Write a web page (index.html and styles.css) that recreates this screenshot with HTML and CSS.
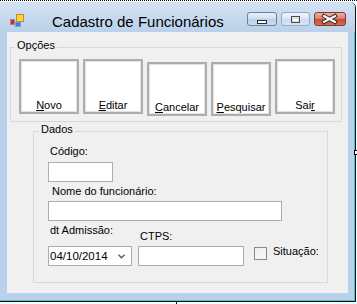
FILE: index.html
```html
<!DOCTYPE html>
<html>
<head>
  <meta charset="UTF-8">
  <title>Cadastro de Funcionários</title>
  <link rel="stylesheet" href="styles.css">
</head>
<body>
  <div class="marquee"></div>
  <div class="window">
    <div class="titlebar">
      <svg class="app-icon" width="14" height="13" viewBox="0 0 14 13">
        <rect x="6.5" y="0.5" width="7" height="7" fill="#ffd23c" stroke="#d08a1c"/>
        <rect x="0.5" y="5.5" width="4" height="5" fill="#d42a22" stroke="#9a8a8a"/>
        <rect x="5.5" y="8" width="5" height="4.5" fill="#3b7fd8" stroke="#7aa3dc"/>
      </svg>
      <span class="title">Cadastro de Funcionários</span>
      <div class="caption">
        <span class="cap cap-min">
          <svg width="28" height="12" viewBox="0 0 28 12"><rect x="9.5" y="7.5" width="9" height="3" fill="#fff" stroke="#2b2b2b"/></svg>
        </span>
        <span class="cap cap-max">
          <svg width="27" height="12" viewBox="0 0 27 12"><rect x="9.5" y="3.5" width="8" height="6" fill="none" stroke="#4a4a4a"/><rect x="10.5" y="5.5" width="6" height="3" fill="#fff" stroke="#d8d8d8"/></svg>
        </span>
        <span class="cap cap-close">
          <svg width="30" height="12" viewBox="0 0 30 12"><path d="M9 3 L20 9 M20 3 L9 9" stroke="#3a2a2a" stroke-width="4" stroke-linecap="square"/><path d="M9 3 L20 9 M20 3 L9 9" stroke="#fff" stroke-width="2" stroke-linecap="square"/></svg>
        </span>
      </div>
    </div>
    <div class="client">
      <fieldset class="group group-opcoes">
        <legend>Opções</legend>
        <div class="btn-row">
          <button class="btn"><u>N</u>ovo</button>
          <button class="btn"><u>E</u>ditar</button>
          <button class="btn btn-low"><u>C</u>ancelar</button>
          <button class="btn btn-low"><u>P</u>esquisar</button>
          <button class="btn">Sai<u>r</u></button>
        </div>
      </fieldset>
      <fieldset class="group group-dados">
        <legend>Dados</legend>
        <label class="lbl">Código:</label>
        <input type="text" class="textbox tb-codigo">
        <label class="lbl lbl-nome">Nome do funcionário:</label>
        <input type="text" class="textbox tb-nome">
        <div class="row-bottom">
          <div class="col-data">
            <label class="lbl">dt Admissão:</label>
            <div class="datebox">
              <span>04/10/2014</span>
              <svg width="7" height="5" viewBox="0 0 7 5"><path d="M0.5 0.8 L3.5 3.8 L6.5 0.8" fill="none" stroke="#5a5a5a" stroke-width="1.4"/></svg>
            </div>
          </div>
          <div class="col-ctps">
            <label class="lbl">CTPS:</label>
            <input type="text" class="textbox tb-ctps">
          </div>
          <div class="col-situacao">
            <span class="checkbox"></span>
            <label class="lbl-check">Situação:</label>
          </div>
        </div>
      </fieldset>
    </div>
  </div>
  <span class="resize-tip"></span>
  <span class="bottom-tick"></span>
</body>
</html>
```

FILE: styles.css
```css
body {
  margin: 0;
  width: 357px;
  height: 304px;
  position: relative;
  overflow: hidden;
  background: #fff;
  font-family: "Liberation Sans", Arial, sans-serif;
  font-size: 11px;
  color: #000;
}
.marquee { height: 0; border-top: 1px dotted #000; margin-bottom: 1px; }

.window {
  box-sizing: border-box;
  width: 356px;
  height: 300px;
  background: #b9d1ea;
  border-right: 1px solid #111;
  border-bottom: 1px solid #111;
  border-top-right-radius: 6px;
  box-shadow: inset -1px -1px 0 #3fc8d8;
  overflow: hidden;
}

.titlebar {
  display: flex;
  align-items: flex-start;
  height: 30px;
  padding: 0 9px 0 10px;
  background: linear-gradient(#d3e2f3, #bad1ea);
}
.app-icon { margin-top: 12px; flex: none; }
.title {
  margin: 11px 0 0 28px;
  font-size: 15px;
  line-height: 18px;
  color: #000;
  white-space: nowrap;
}
.caption { display: flex; gap: 4px; margin: 10px 0 0 auto; }
.cap {
  box-sizing: border-box;
  display: block;
  height: 14px;
  border-radius: 3px;
}
.cap svg { display: block; }
.cap-min {
  width: 30px;
  border: 1px solid #6c819e;
  background: linear-gradient(#e7eff9 0%, #d3e1f1 45%, #b9cee9 50%, #cbdcf0 100%);
}
.cap-max {
  width: 29px;
  border: 1px solid #94a9c6;
  background: linear-gradient(#edf3fa 0%, #dde8f4 45%, #cad9ed 50%, #d8e5f3 100%);
}
.cap-close {
  width: 32px;
  border: 1px solid #86362a;
  background: linear-gradient(#eab0a2 0%, #dc8672 45%, #c84a33 50%, #d56d55 100%);
}

.client {
  width: 341px;
  height: 261px;
  margin-left: 7px;
  background: #f0f0f0;
  overflow: hidden;
}

.group {
  box-sizing: border-box;
  min-width: 0;
  margin: 0;
  border: 1px solid #d5d9dd;
}
.group legend {
  padding: 0 2px 3px;
  font-size: 11px;
  line-height: 13px;
}
.group-opcoes { width: 332px; margin: 7px 0 0 3px; padding: 4px 0 5px 8px; }
.group-opcoes legend { margin-left: -4px; }
.group-dados { width: 295px; margin: 1px 0 0 26px; padding: 6px 0 16px 14px; }
.group-dados legend { margin-left: -9px; }

.btn-row { display: flex; gap: 4px; align-items: flex-start; }
.btn {
  box-sizing: border-box;
  width: 60px;
  height: 55px;
  display: flex;
  align-items: flex-end;
  justify-content: center;
  padding: 0;
  border: 2px solid #adadad;
  background: #fff;
  box-shadow: inset 0 0 0 1px #e2e2e2;
  font: 11px/13px "Liberation Sans", Arial, sans-serif;
  color: #000;
}
.btn-low { margin-top: 3px; height: 54px; }

.lbl { display: block; line-height: 13px; margin-left: 2px; }
.lbl-nome { margin: 3px 0 0 4px; }

.textbox {
  display: block;
  box-sizing: border-box;
  height: 20px;
  margin: 0;
  padding: 0;
  border: 1px solid #abadb3;
  background: #fff;
}
.tb-codigo { width: 65px; margin-top: 4px; }
.tb-nome { width: 234px; margin-top: 3px; }
.tb-ctps { width: 106px; margin-top: 3px; }

.row-bottom { display: flex; align-items: flex-start; margin-top: 3px; }
.col-ctps { margin-left: 6px; padding-top: 6px; }
.col-situacao { display: flex; align-items: flex-start; margin: 21px 0 0 10px; }

.datebox {
  box-sizing: border-box;
  width: 84px;
  height: 20px;
  margin-top: 9px;
  display: flex;
  align-items: center;
  justify-content: space-between;
  padding: 0 6px 0 1px;
  border: 1px solid #abadb3;
  background: #fff;
  font-size: 11.5px;
}

.checkbox {
  box-sizing: border-box;
  width: 13px;
  height: 13px;
  margin-top: 2px;
  border: 1px solid #8a8a8a;
  background: linear-gradient(135deg, #e9e9e9, #fdfdfd);
  box-shadow: inset 0 0 0 1px #f2f2f2;
}
.lbl-check { margin-left: 6px; line-height: 13px; }

.resize-tip {
  position: absolute;
  left: 354px;
  top: 150px;
  width: 3px;
  height: 3px;
  border: 1px solid #000;
  background: #fff;
}
.bottom-tick {
  position: absolute;
  left: 176px;
  top: 301px;
  width: 1px;
  height: 3px;
  background: #000;
}
```
